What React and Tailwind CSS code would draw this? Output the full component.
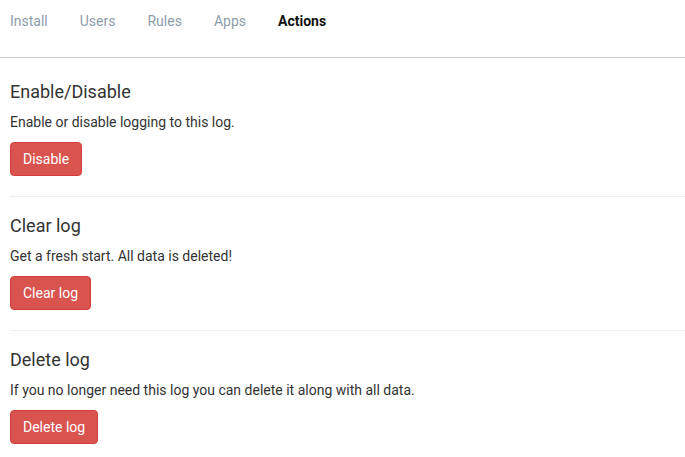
const TABS = ['Install', 'Users', 'Rules', 'Apps', 'Actions'];

const SECTIONS = [
  { title: 'Enable/Disable', text: 'Enable or disable logging to this log.', button: 'Disable' },
  { title: 'Clear log', text: 'Get a fresh start. All data is deleted!', button: 'Clear log' },
  { title: 'Delete log', text: 'If you no longer need this log you can delete it along with all data.', button: 'Delete log' },
];

const App = () => {
  return (
    <div className="bg-white w-[685px] h-[457px] overflow-hidden text-[#333]" style={{ fontFamily: 'Roboto, "Liberation Sans", sans-serif' }}>
      <div className="h-[58px] border-b border-[#cccccc] flex gap-[32px] pl-[10px] pt-[11px]">
        {TABS.map((t) => (
          <span
            key={t}
            className={t === 'Actions' ? 'text-[14px] leading-5 font-bold text-[#111]' : 'text-[14px] leading-5 text-[#8f9dab]'}
          >
            {t}
          </span>
        ))}
      </div>

      <div className="pl-[10px] pt-[24px]">
        {SECTIONS.map((s, i) => (
          <div key={s.title}>
            {i > 0 && <div className="border-t border-[#eeeeee] mb-[19px]" />}
            <h3 className="text-[18px] leading-5 font-normal text-[#333] mb-[10px]">{s.title}</h3>
            <p className="text-[14px] leading-5 text-[#333] mb-[10px]">{s.text}</p>
            <button className="h-[34px] px-[12px] rounded-[4px] bg-[#d9534f] border border-[#d43f3a] text-white text-[14px] font-normal mb-[20px]">
              {s.button}
            </button>
          </div>
        ))}
      </div>
    </div>
  );
};

export default App;
